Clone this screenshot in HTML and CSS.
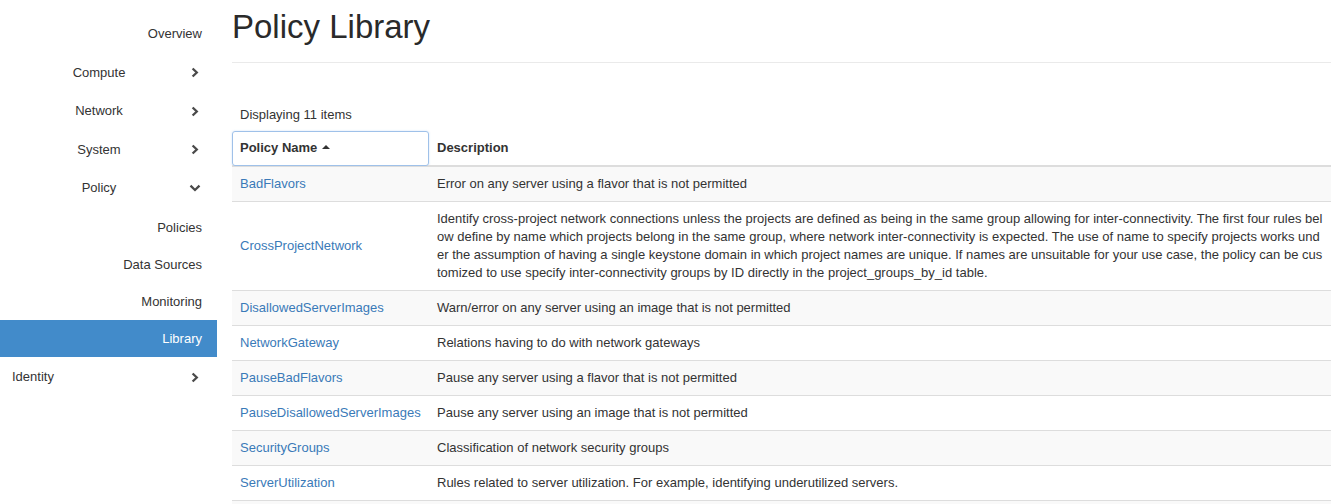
FILE: index.html
```html
<!DOCTYPE html>
<html lang="en">
<head>
<meta charset="utf-8">
<title>Policy Library</title>
<link rel="stylesheet" href="styles.css">
</head>
<body>
<div class="layout">
  <nav class="sidebar">
    <a class="nav-item nav-plain">Overview</a>
    <a class="nav-item nav-group"><span class="nav-label">Compute</span><svg class="chev" width="8" height="11" viewBox="0 0 8 11"><path d="M1.6 1.5 L5.8 5.5 L1.6 9.5"/></svg></a>
    <a class="nav-item nav-group"><span class="nav-label">Network</span><svg class="chev" width="8" height="11" viewBox="0 0 8 11"><path d="M1.6 1.5 L5.8 5.5 L1.6 9.5"/></svg></a>
    <a class="nav-item nav-group"><span class="nav-label">System</span><svg class="chev" width="8" height="11" viewBox="0 0 8 11"><path d="M1.6 1.5 L5.8 5.5 L1.6 9.5"/></svg></a>
    <a class="nav-item nav-group"><span class="nav-label">Policy</span><svg class="chev chev-down" width="12" height="8" viewBox="0 0 12 8"><path d="M1.5 1.6 L6 6 L10.5 1.6"/></svg></a>
    <div class="submenu">
      <a class="sub-item">Policies</a>
      <a class="sub-item">Data Sources</a>
      <a class="sub-item">Monitoring</a>
      <a class="sub-item active">Library</a>
    </div>
    <a class="nav-item nav-group nav-left"><span class="nav-label">Identity</span><svg class="chev" width="8" height="11" viewBox="0 0 8 11"><path d="M1.6 1.5 L5.8 5.5 L1.6 9.5"/></svg></a>
  </nav>
  <main class="content">
    <div class="page-header"><h1>Policy Library</h1></div>
    <div class="count">Displaying 11 items</div>
    <table class="table">
      <colgroup><col class="col-name"><col class="col-desc"></colgroup>
      <thead>
        <tr><th class="sorted"><span>Policy Name</span><span class="caret-up"></span></th><th>Description</th></tr>
      </thead>
      <tbody>
        <tr><td><a>BadFlavors</a></td><td>Error on any server using a flavor that is not permitted</td></tr>
        <tr><td><a>CrossProjectNetwork</a></td><td>Identify cross-project network connections unless the projects are defined as being in the same group allowing for inter-connectivity. The first four rules below define by name which projects belong in the same group, where network inter-connectivity is expected. The use of name to specify projects works under the assumption of having a single keystone domain in which project names are unique. If names are unsuitable for your use case, the policy can be customized to use specify inter-connectivity groups by ID directly in the project_groups_by_id table.</td></tr>
        <tr><td><a>DisallowedServerImages</a></td><td>Warn/error on any server using an image that is not permitted</td></tr>
        <tr><td><a>NetworkGateway</a></td><td>Relations having to do with network gateways</td></tr>
        <tr><td><a>PauseBadFlavors</a></td><td>Pause any server using a flavor that is not permitted</td></tr>
        <tr><td><a>PauseDisallowedServerImages</a></td><td>Pause any server using an image that is not permitted</td></tr>
        <tr><td><a>SecurityGroups</a></td><td>Classification of network security groups</td></tr>
        <tr><td><a>ServerUtilization</a></td><td>Rules related to server utilization. For example, identifying underutilized servers.</td></tr>
        <tr><td><a>TagBasedNetworkSecurityZone</a></td><td>Enforce tag based network security zones</td></tr>
      </tbody>
    </table>
  </main>
</div>
</body>
</html>
```

FILE: styles.css
```css
html, body {
  margin: 0;
  padding: 0;
  height: 100%;
  overflow: hidden;
  background: #fff;
}
body {
  font-family: "Liberation Sans", Arial, Helvetica, sans-serif;
  font-size: 13px;
  line-height: 18px;
  color: #333;
}
.layout {
  display: flex;
  align-items: flex-start;
}
.sidebar {
  flex: 0 0 217px;
  width: 217px;
  padding-top: 15px;
  display: flex;
  flex-direction: column;
}
.nav-item {
  height: 38.5px;
  display: flex;
  align-items: center;
  color: #333;
  cursor: pointer;
}
.nav-plain {
  justify-content: flex-end;
  padding-right: 15px;
}
.nav-label {
  box-sizing: border-box;
  width: 191px;
  padding-left: 7px;
  text-align: center;
}
.nav-left .nav-label {
  text-align: left;
  padding-left: 12px;
}
.nav-left {
  height: 40px;
}
.chev {
  flex: 0 0 auto;
  fill: none;
  stroke: #4a4a4a;
  stroke-width: 2.3;
  stroke-linecap: butt;
  stroke-linejoin: miter;
}
.chev-down {
  margin-left: -2px;
}
.submenu {
  margin-top: 1.5px;
  display: flex;
  flex-direction: column;
}
.sub-item {
  height: 37px;
  display: flex;
  align-items: center;
  justify-content: flex-end;
  padding-right: 15px;
  color: #333;
  cursor: pointer;
}
.sub-item.active {
  background: #428bca;
  color: #fff;
}
.content {
  flex: 1 1 auto;
  min-width: 0;
  margin-left: 15px;
  margin-right: 8px;
}
.page-header {
  padding-bottom: 17px;
  border-bottom: 1px solid #eaeaea;
}
.page-header h1 {
  margin: 9px 0 0 0;
  font-size: 33px;
  font-weight: 400;
  line-height: 36px;
  color: #2a2a2a;
}
.count {
  margin-top: 43px;
  padding-left: 8px;
  height: 18px;
  margin-bottom: 7px;
}
.table {
  width: 100%;
  table-layout: fixed;
  border-collapse: collapse;
  border-spacing: 0;
}
.col-name { width: 197px; }
.table th,
.table td {
  padding: 8px;
  text-align: left;
  vertical-align: middle;
}
.table th {
  font-weight: 700;
  border-bottom: 2px solid #ddd;
  white-space: nowrap;
}
.table th.sorted {
  border-radius: 3px;
  outline: 1px solid #9fc1e9;
  outline-offset: -1px;
  box-shadow: 0 0 2px rgba(102,160,230,.35);
}
.caret-up {
  display: inline-block;
  width: 0;
  height: 0;
  margin-left: 5px;
  vertical-align: 3px;
  border-left: 4px solid transparent;
  border-right: 4px solid transparent;
  border-bottom: 4px solid #333;
}
.table td {
  border-top: 1px solid #ddd;
}
.table td:last-child {
  word-break: break-all;
}
.table td:first-child {
  white-space: nowrap;
}
.table tbody tr:nth-child(odd) {
  background: #f9f9f9;
}
.table a {
  color: #3a7ab8;
  text-decoration: none;
  cursor: pointer;
}
```
